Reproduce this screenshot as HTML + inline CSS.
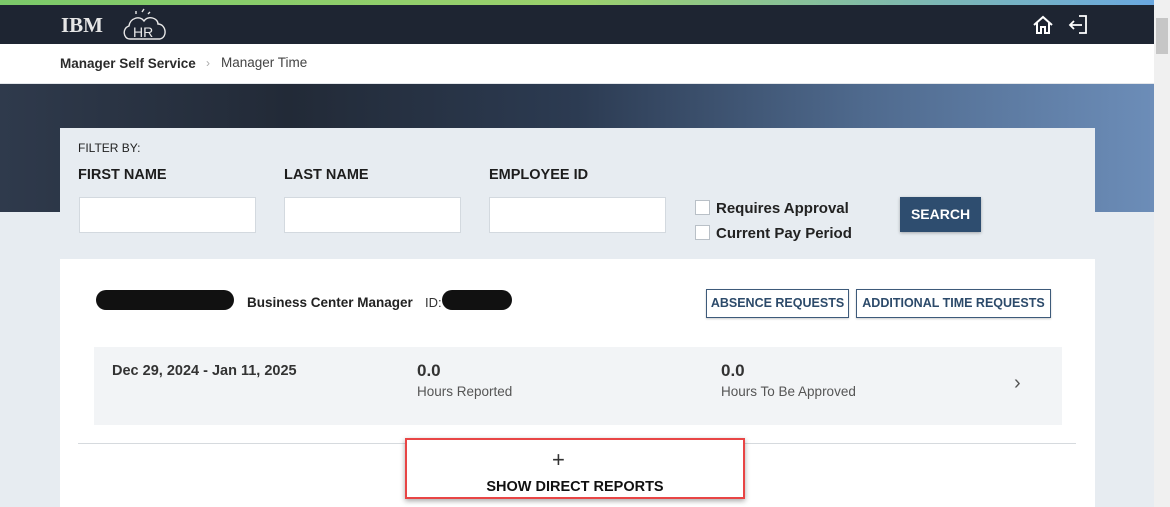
<!DOCTYPE html>
<html><head><meta charset="utf-8"><style>
*{margin:0;padding:0;box-sizing:border-box}
body{width:1170px;height:507px;overflow:hidden;position:relative;background:#e7ecf1;font-family:"Liberation Sans",sans-serif;color:#222}
.a{position:absolute}
.inp{position:absolute;background:#fff;border:1px solid #d3d9df;height:36px;width:177px;top:197px}
.lbl{position:absolute;top:167px;font-weight:bold;font-size:14.5px;color:#1d1d1d}
.cb{position:absolute;left:695px;width:15px;height:15px;background:#fff;border:1px solid #b9c0c7}
.cbl{position:absolute;left:716px;font-weight:bold;font-size:15px;color:#222}
.btn{position:absolute;top:289px;height:29px;border:1px solid #3d5a7a;background:#fff;color:#2c4a6a;font-weight:bold;font-size:12.5px;line-height:27px;text-align:center;box-shadow:0 1px 2px rgba(0,0,0,.2)}
</style></head><body>
<div class="a" style="left:0;top:0;width:1154px;height:5px;background:linear-gradient(90deg,#7bc96a,#9bd06c 50%,#6aa8e0)"></div>
<div class="a" style="left:0;top:5px;width:1154px;height:39px;background:#1e2532"></div>
<div class="a" style="left:61px;top:13px;color:#e6e6e6;font-family:'Liberation Serif',serif;font-weight:bold;font-size:21px">IBM</div>
<svg class="a" style="left:120px;top:6px" width="52" height="36" viewBox="0 0 52 36" fill="none" stroke="#e8e8e8" stroke-width="1.4">
<path d="M10 33 C3 33 2 22 9 20 C10 12 20 9 24 15 C28 9 38 12 38 18 C46 18 48 31 40 33 Z"/>
<text x="13" y="31" fill="#e8e8e8" stroke="none" font-size="14" font-family="Liberation Sans">HR</text>
<path d="M16 8 l0-3 M22 6 l2-3 M28 8 l2-2"/></svg>
<svg class="a" style="left:1032px;top:14px" width="22" height="22" viewBox="0 0 22 22" fill="none" stroke="#fff" stroke-width="2"><path d="M2 11 L11 3 L20 11 M5 9 V19 H9 V13 H13 V19 H17 V9"/></svg>
<svg class="a" style="left:1068px;top:14px" width="22" height="22" viewBox="0 0 22 22" fill="none" stroke="#fff" stroke-width="1.8"><path d="M11 2 H18 V19 H11 M2 11 H14 M6 7 L2 11 L6 15"/></svg>
<div class="a" style="left:0;top:44px;width:1154px;height:40px;background:#fff;border-bottom:1px solid #e3e6ea"></div>
<div class="a" style="left:60px;top:56px;font-size:13.5px;font-weight:bold;color:#2b2b2b">Manager Self Service</div>
<div class="a" style="left:206px;top:56px;font-size:12px;color:#aaa">›</div>
<div class="a" style="left:221px;top:55px;font-size:13.5px;color:#444">Manager Time</div>
<div class="a" style="left:0;top:84px;width:1154px;height:128px;background:linear-gradient(90deg,#2f3a4c 0%,#222a37 25%,#2c3b52 50%,#4f6a8e 75%,#6c8db8 100%)"></div>
<div class="a" style="left:1154px;top:0;width:16px;height:507px;background:#f0f0f0"></div>
<div class="a" style="left:1156px;top:18px;width:12px;height:36px;background:#c6c6c6"></div>
<div class="a" style="left:60px;top:128px;width:1035px;height:131px;background:#e7ecf1"></div>
<div class="a" style="left:78px;top:141px;font-size:12px;color:#222">FILTER BY:</div>
<div class="lbl" style="left:78px">FIRST NAME</div>
<div class="lbl" style="left:284px">LAST NAME</div>
<div class="lbl" style="left:489px">EMPLOYEE ID</div>
<div class="inp" style="left:79px"></div>
<div class="inp" style="left:284px"></div>
<div class="inp" style="left:489px"></div>
<div class="cb" style="top:200px"></div><div class="cbl" style="top:200px">Requires Approval</div>
<div class="cb" style="top:225px"></div><div class="cbl" style="top:225px">Current Pay Period</div>
<div class="a" style="left:900px;top:197px;width:81px;height:35px;background:#2e4d6f;color:#fff;font-weight:bold;font-size:14px;line-height:35px;text-align:center;box-shadow:0 1px 3px rgba(0,0,0,.3)">SEARCH</div>
<div class="a" style="left:60px;top:259px;width:1035px;height:248px;background:#fff"></div>
<div class="a" style="left:96px;top:290px;width:138px;height:20px;border-radius:10px;background:#111"></div>
<div class="a" style="left:247px;top:295px;font-size:13.5px;font-weight:bold;color:#222">Business Center Manager</div>
<div class="a" style="left:425px;top:295px;font-size:13px;color:#333">ID:</div>
<div class="a" style="left:442px;top:290px;width:70px;height:20px;border-radius:10px;background:#111"></div>
<div class="btn" style="left:706px;width:143px">ABSENCE REQUESTS</div>
<div class="btn" style="left:856px;width:195px">ADDITIONAL TIME REQUESTS</div>
<div class="a" style="left:94px;top:347px;width:968px;height:78px;background:#f2f4f6"></div>
<div class="a" style="left:112px;top:363px;font-size:14.5px;font-weight:bold;color:#333">Dec 29, 2024 - Jan 11, 2025</div>
<div class="a" style="left:417px;top:361px;font-size:17px;font-weight:bold;color:#333">0.0</div>
<div class="a" style="left:417px;top:384px;font-size:13.5px;color:#555">Hours Reported</div>
<div class="a" style="left:721px;top:361px;font-size:17px;font-weight:bold;color:#333">0.0</div>
<div class="a" style="left:721px;top:384px;font-size:13.5px;color:#555">Hours To Be Approved</div>
<div class="a" style="left:1014px;top:372px;font-size:20px;color:#555">›</div>
<div class="a" style="left:78px;top:443px;width:998px;height:1px;background:#d6dade"></div>
<div class="a" style="left:405px;top:438px;width:340px;height:61px;border:2.5px solid #e84545;background:#fff;box-shadow:0 2px 5px rgba(0,0,0,.35)"></div>
<div class="a" style="left:552px;top:447px;font-size:22px;color:#333">+</div>
<div class="a" style="left:405px;top:479px;width:340px;text-align:center;font-size:14.5px;font-weight:bold;color:#111">SHOW DIRECT REPORTS</div>
</body></html>
